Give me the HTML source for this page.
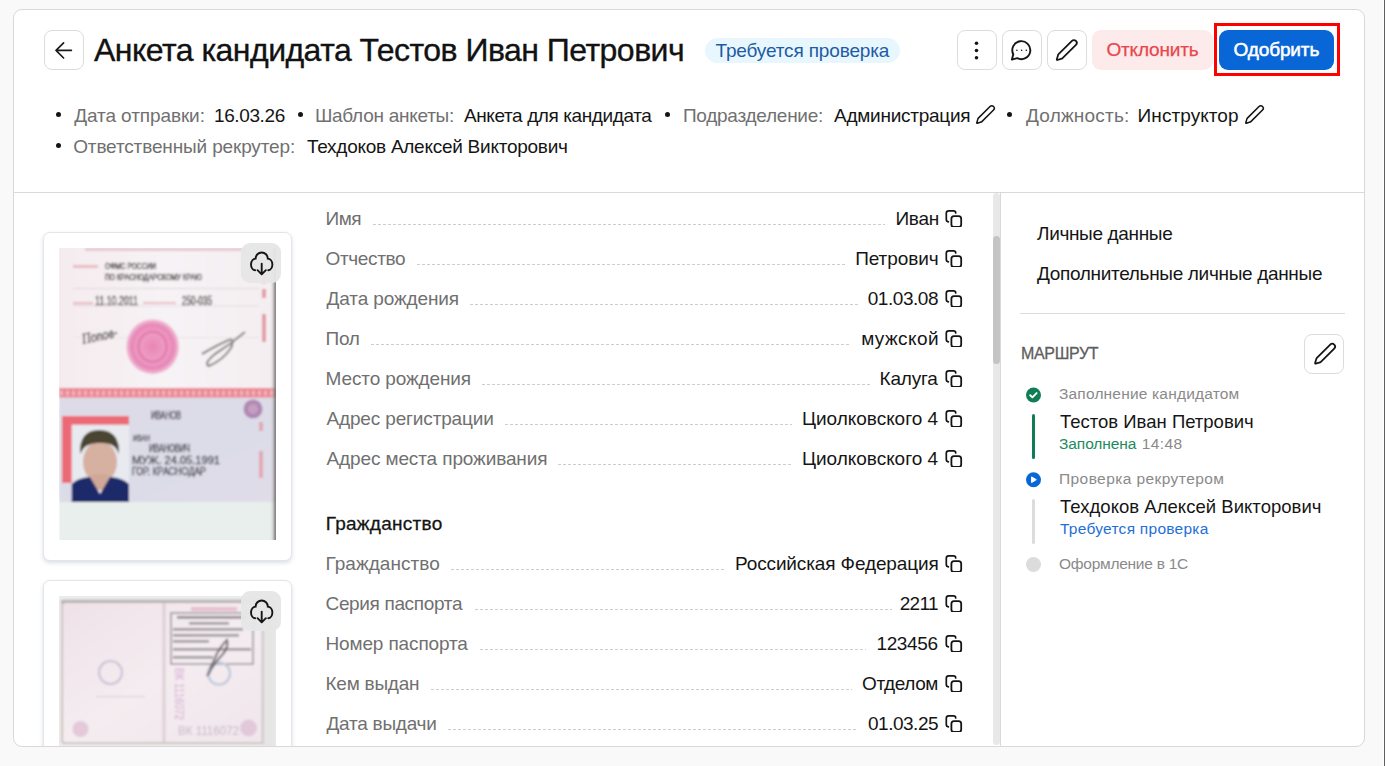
<!DOCTYPE html>
<html><head><meta charset="utf-8">
<style>
*{box-sizing:border-box;margin:0;padding:0}
html,body{width:1385px;height:766px;overflow:hidden;background:#f9f9f9;font-family:"Liberation Sans",sans-serif;color:#151515}
.a{position:absolute}
.t{position:absolute;white-space:nowrap;line-height:1}
#card{position:absolute;left:13px;top:9px;width:1352px;height:738px;border:1px solid #d9d9d9;border-radius:9px;background:#fff}
.ib{position:absolute;border:1px solid #dcdcdc;border-radius:8px;background:#fff;width:40px;height:40px}
.ib svg{position:absolute;left:-1px;top:-1px}
.dot{position:absolute;width:5px;height:5px;border-radius:50%;background:#151515}
.lead{position:absolute;height:1px;background:repeating-linear-gradient(90deg,#cdcdcd 0 3px,transparent 3px 5px)}
.cp{position:absolute;left:943px;width:20px;height:20px}
.pc{position:absolute;border:1px solid #e1e6ee;border-radius:7px;background:#fff;box-shadow:0 2px 4px rgba(30,50,90,.16)}
.dl{position:absolute;width:40px;height:40px;border-radius:9px;background:rgba(230,230,230,.96)}
.dl svg{position:absolute;left:0;top:0}
</style></head>
<body>
<div class="a" style="left:1383px;top:0;width:1px;height:766px;background:#fff"></div><div class="a" style="left:1384px;top:0;width:1px;height:766px;background:#5f5f5f"></div>
<div id="card"></div>

<!-- back button -->
<div class="ib" style="left:44px;top:30px">
  <svg width="40" height="40" viewBox="0 0 40 40"><path d="M27.4 20.4H12M19.6 12.8L12 20.4L19.6 28" fill="none" stroke="#1a1a1a" stroke-width="1.65" stroke-linecap="round" stroke-linejoin="round"/></svg>
</div>
<!-- badge -->
<div class="a" style="left:705px;top:38px;width:195px;height:25px;border-radius:12.5px;background:#e8f7fd"></div>

<!-- icon buttons -->
<div class="ib" style="left:957px;top:30px">
  <svg width="40" height="40" viewBox="0 0 40 40"><circle cx="19.5" cy="13.2" r="1.8" fill="#151515"/><circle cx="19.5" cy="20.5" r="1.8" fill="#151515"/><circle cx="19.5" cy="27.8" r="1.8" fill="#151515"/></svg>
</div>
<div class="ib" style="left:1002px;top:30px">
  <svg width="40" height="40" viewBox="0 0 40 40"><g transform="translate(7.3 8.2)"><path d="M7.9 20A9 9 0 1 0 4 16.1L2.6 21.4Z" fill="none" stroke="#151515" stroke-width="1.9" stroke-linejoin="round"/><circle cx="7.6" cy="12" r=".8" fill="#151515"/><circle cx="12.3" cy="12" r=".8" fill="#151515"/><circle cx="17" cy="12" r=".8" fill="#151515"/></g></svg>
</div>
<div class="ib" style="left:1047px;top:30px">
  <svg width="40" height="40" viewBox="0 0 40 40"><g transform="translate(7.75 8.05)"><path d="M21.174 6.812a1 1 0 0 0-3.986-3.987L3.842 16.174a2 2 0 0 0-.5.83l-1.321 4.352a.5.5 0 0 0 .623.622l4.353-1.32a2 2 0 0 0 .83-.497z" fill="none" stroke="#151515" stroke-width="1.75" stroke-linejoin="round"/></g></svg>
</div>
<div class="a" style="left:1092px;top:30px;width:121px;height:40px;border-radius:9px;background:#fdeaea"></div>
<div class="a" style="left:1219px;top:30px;width:115px;height:40px;border-radius:9px;background:#0866d6"></div>
<div class="a" style="left:1214px;top:23px;width:126px;height:53px;border:3px solid #ff0000"></div>

<!-- meta bullets & pencils -->
<div class="dot" style="left:56.25px;top:112.45px"></div>
<div class="dot" style="left:298.15px;top:112.45px"></div>
<div class="dot" style="left:664.95px;top:112.45px"></div>
<div class="dot" style="left:1007.45px;top:112.45px"></div>
<div class="dot" style="left:56.25px;top:143.25px"></div>
<svg class="a" style="left:974.85px;top:103.95px" width="21" height="21" viewBox="0 0 24 24"><path d="M21.174 6.812a1 1 0 0 0-3.986-3.987L3.842 16.174a2 2 0 0 0-.5.83l-1.321 4.352a.5.5 0 0 0 .623.622l4.353-1.32a2 2 0 0 0 .83-.497z" fill="none" stroke="#151515" stroke-width="1.75" stroke-linejoin="round"/></svg>
<svg class="a" style="left:1243.7px;top:103.95px" width="21" height="21" viewBox="0 0 24 24"><path d="M21.174 6.812a1 1 0 0 0-3.986-3.987L3.842 16.174a2 2 0 0 0-.5.83l-1.321 4.352a.5.5 0 0 0 .623.622l4.353-1.32a2 2 0 0 0 .83-.497z" fill="none" stroke="#151515" stroke-width="1.75" stroke-linejoin="round"/></svg>

<div class="a" style="left:14px;top:192px;width:1350px;height:1px;background:#d9d9d9"></div>

<!-- content clip -->
<div class="a" style="left:14px;top:193px;width:1350px;height:553px;overflow:hidden">
 <div class="a" style="left:-14px;top:-193px;width:1385px;height:766px">
  <!-- photo card 1 -->
  <div class="pc" style="left:43px;top:232px;width:249px;height:329px"></div>
  <svg class="a" style="left:59px;top:248px" width="217" height="292" viewBox="0 0 217 292">
<defs>
 <pattern id="chk" x="0" y="0" width="6" height="5" patternUnits="userSpaceOnUse"><rect x="1" y="0" width="3" height="5" fill="#f6c6cc"/></pattern>
 <filter id="bl1" x="-5%" y="-5%" width="110%" height="110%"><feGaussianBlur stdDeviation="0.9"/></filter>
 <filter id="bl2" x="-20%" y="-20%" width="140%" height="140%"><feGaussianBlur stdDeviation="1.6"/></filter>
 <linearGradient id="pg1" x1="0" y1="0" x2="1" y2="0"><stop offset="0" stop-color="#f5ebef"/><stop offset=".5" stop-color="#f6f3f5"/><stop offset="1" stop-color="#f4eef1"/></linearGradient>
 <linearGradient id="lav" x1="0" y1="0" x2="1" y2="1"><stop offset="0" stop-color="#dedbe7"/><stop offset=".6" stop-color="#dcdce8"/><stop offset="1" stop-color="#e0dde8"/></linearGradient>
 <linearGradient id="edge" x1="0" y1="0" x2="1" y2="0"><stop offset="0" stop-color="#f3edf0" stop-opacity="0"/><stop offset=".55" stop-color="#9d9899" stop-opacity=".6"/><stop offset=".8" stop-color="#4a4646"/><stop offset="1" stop-color="#8a8686"/></linearGradient>
 <radialGradient id="stamp" cx=".5" cy=".5" r=".5"><stop offset="0" stop-color="#e77fb0"/><stop offset=".55" stop-color="#ee9cc4"/><stop offset=".8" stop-color="#e680b2"/><stop offset="1" stop-color="#f1c3d9"/></radialGradient>
</defs>
<g filter="url(#bl1)">
 <rect x="-2" y="-2" width="221" height="144" fill="url(#pg1)"/>
 <rect x="26" y="0" width="160" height="3" fill="#e3b7c4" opacity=".7"/>
 <rect x="14" y="17" width="25" height="3" fill="#e6b0b8" opacity=".8"/>
 <text x="46" y="21" font-family="Liberation Sans" font-size="9.5" fill="#3d393b" stroke="#3d393b" stroke-width=".35" textLength="51" lengthAdjust="spacingAndGlyphs">ОФМС РОССИИ</text>
 <text x="46" y="32" font-family="Liberation Sans" font-size="9.5" fill="#3d393b" stroke="#3d393b" stroke-width=".35" textLength="97" lengthAdjust="spacingAndGlyphs">ПО КРАСНОДАРСКОМУ КРАЮ</text>
 <rect x="14" y="40" width="186" height="1" fill="#e2d6dc"/>
 <rect x="14" y="54" width="20" height="2.5" fill="#e6b0b8" opacity=".8"/>
 <text x="36" y="57" font-family="Liberation Sans" font-size="12" fill="#3a3637" stroke="#3a3637" stroke-width=".3" textLength="43" lengthAdjust="spacingAndGlyphs">11.10.2011</text>
 <rect x="84" y="54" width="33" height="2" fill="#e6b0b8" opacity=".8"/>
 <text x="123" y="57" font-family="Liberation Sans" font-size="12" fill="#3a3637" stroke="#3a3637" stroke-width=".3" textLength="30" lengthAdjust="spacingAndGlyphs">250-035</text>
 <rect x="14" y="57.5" width="186" height="1" fill="#e4dadf"/>
 <rect x="14" y="89" width="186" height="1" fill="#eae0e4"/>
 <text x="0" y="0" transform="translate(24 96) rotate(-12)" font-family="Liberation Serif" font-style="italic" font-size="15" fill="#5a5658" stroke="#5a5658" stroke-width=".5" textLength="36" lengthAdjust="spacingAndGlyphs">Попов-</text>
 <ellipse cx="93.6" cy="98.7" rx="26.5" ry="27.5" fill="url(#stamp)" opacity=".95"/>
 <ellipse cx="93.6" cy="98.7" rx="14" ry="15" fill="none" stroke="#e06aa3" stroke-width="3" opacity=".6"/>
 <path d="M143 106 Q160 96 170 92 Q176 90 172 100 Q164 112 150 118 Q144 116 156 106 Q172 96 186 84" fill="none" stroke="#6d6a6b" stroke-width="2.2" opacity=".8"/>
 <rect x="203" y="20" width="4" height="15" fill="#e49aa8"/>
 <rect x="203" y="41" width="4" height="9" fill="#e49aa8"/>
 <rect x="203" y="66" width="4" height="28" fill="#e49aa8"/>
 <rect x="0" y="140" width="217" height="10" fill="#eb8592"/><rect x="0" y="142.5" width="217" height="5" fill="url(#chk)" opacity=".7"/>
 <rect x="0" y="149.5" width="217" height="105" fill="url(#lav)"/>
 <circle cx="194" cy="161" r="9.5" fill="#a879aa" opacity=".85"/>
 <circle cx="194" cy="161" r="5" fill="#c9a5c4" opacity=".8"/>
 <text x="92" y="171" font-family="Liberation Sans" font-size="10" fill="#3c3944" stroke="#3c3944" stroke-width=".3" textLength="30" lengthAdjust="spacingAndGlyphs">ИВАНОВ</text>
 <rect x="3" y="168" width="67" height="9" fill="#ec6b76"/>
 <rect x="3" y="168" width="10" height="67" fill="#ec6b76"/>
 <rect x="12.7" y="176.7" width="57.3" height="77.3" fill="#e8eaf0"/>
 <ellipse cx="41" cy="214" rx="17" ry="21" fill="#d6b0a0"/>
 <path d="M21 206 Q20 182 40 182 Q61 182 60 206 Q56 194 41 195 Q26 194 21 206Z" fill="#4a4430"/>
 <rect x="33" y="226" width="16" height="16" fill="#d1a898"/><path d="M12.7 254 L12.7 236 Q18 230 31 229 L41 246 L51 229 Q64 230 70 236 L70 254Z" fill="#1e2a6a"/>
 <text x="74" y="193" font-family="Liberation Sans" font-size="9" fill="#3c3944" stroke="#3c3944" stroke-width=".3" textLength="17" lengthAdjust="spacingAndGlyphs">ИВАН</text>
 <text x="90" y="204" font-family="Liberation Sans" font-size="10" fill="#3c3944" stroke="#3c3944" stroke-width=".3" textLength="41" lengthAdjust="spacingAndGlyphs">ИВАНОВИЧ</text>
 <text x="73" y="216" font-family="Liberation Sans" font-size="10" fill="#3c3944" stroke="#3c3944" stroke-width=".3" textLength="88" lengthAdjust="spacingAndGlyphs">МУЖ.   24.05.1991</text>
 <text x="73" y="227" font-family="Liberation Sans" font-size="10" fill="#3c3944" stroke="#3c3944" stroke-width=".3" textLength="74" lengthAdjust="spacingAndGlyphs">ГОР. КРАСНОДАР</text>
 <rect x="200" y="174" width="4" height="9" fill="#e49aa8" opacity=".8"/>
 <rect x="200" y="203" width="4" height="27" fill="#e49aa8" opacity=".8"/>
 <rect x="0" y="254" width="217" height="40" fill="#e8efec"/>
 <rect x="211" y="-2" width="7" height="296" fill="url(#edge)"/>
</g>
</svg>

  <div class="dl" style="left:241px;top:243px">
   <svg width="40" height="40" viewBox="0 0 40 40"><path d="M14.1 27.3A4.9 5.9 0 0 1 14.6 15.6A6.1 6.1 0 0 1 26.8 15.6A4.9 5.9 0 0 1 27.3 27.3" fill="none" stroke="#151515" stroke-width="1.9" stroke-linecap="round"/><path d="M20.7 20.6V31.3M16.5 27.2L20.7 31.4L24.9 27.2" fill="none" stroke="#151515" stroke-width="1.9" stroke-linecap="round" stroke-linejoin="round"/></svg>
  </div>
  <!-- photo card 2 -->
  <div class="pc" style="left:43px;top:580px;width:249px;height:329px"></div>
  <svg class="a" style="left:59px;top:596px" width="217" height="160" viewBox="0 0 217 160">
<defs>
 <filter id="bl3" x="-5%" y="-5%" width="110%" height="110%"><feGaussianBlur stdDeviation="1.1"/></filter>
 <linearGradient id="pg2" x1="0" y1="0" x2="1" y2="1"><stop offset="0" stop-color="#efe2e8"/><stop offset=".5" stop-color="#f4ecf0"/><stop offset="1" stop-color="#f0e6eb"/></linearGradient>
 <linearGradient id="topsh" x1="0" y1="0" x2="0" y2="1"><stop offset="0" stop-color="#e9e9e9"/><stop offset=".5" stop-color="#9c9a9b"/><stop offset="1" stop-color="#d9d0d4"/></linearGradient>
</defs>
<g filter="url(#bl3)">
 <rect x="-2" y="-2" width="221" height="170" fill="#ececec"/>
 <rect x="2" y="3" width="208" height="6" rx="3" fill="url(#topsh)"/>
 <rect x="2.5" y="6" width="208" height="142" rx="3" fill="#c4b6b3"/>
 <rect x="4" y="7" width="205" height="139.5" rx="2" fill="url(#pg2)"/>
 <rect x="103.5" y="7" width="3" height="139" fill="#ddd0d6"/>
 <circle cx="51.5" cy="76.5" r="11.5" fill="none" stroke="#c9c6d8" stroke-width="2.2"/>
 <rect x="37" y="100" width="49" height="1.2" fill="#dcd3d8"/>
 <circle cx="21.5" cy="133" r="8" fill="#e3c9da"/>
 <rect x="132" y="11" width="46" height="4" fill="#e3b4c6" opacity=".8"/>
 <rect x="112" y="17" width="82" height="51" fill="none" stroke="#8a8487" stroke-width="1.3"/>
 <rect x="118" y="20" width="70" height="2.6" fill="#6c6768" opacity=".75"/>
 <rect x="130" y="26" width="40" height="2.6" fill="#5a5557" opacity=".55"/>
 <rect x="114" y="32" width="70" height="2.6" fill="#5a5557" opacity=".55"/>
 <rect x="114" y="38" width="66" height="2.6" fill="#5a5557" opacity=".55"/>
 <rect x="114" y="44" width="36" height="2.6" fill="#5a5557" opacity=".55"/>
 <rect x="114" y="52" width="78" height="2.6" fill="#5a5557" opacity=".55"/>
 <rect x="114" y="60" width="40" height="2.6" fill="#5a5557" opacity=".55"/>
 <circle cx="160" cy="77.5" r="11" fill="none" stroke="#c3cade" stroke-width="2.5"/>
 <path d="M148 80 Q156 66 164 58 Q170 50 168 44 Q160 52 156 62 Q152 70 150 78" fill="none" stroke="#5e5a5c" stroke-width="2.2" opacity=".8"/>
 <text x="0" y="0" transform="translate(116 72) rotate(90)" font-family="Liberation Sans" font-size="13" fill="#d6a9d2" textLength="52" lengthAdjust="spacingAndGlyphs">ВК 1116072</text>
 <text x="119" y="139" font-family="Liberation Sans" font-size="12" fill="#c9b9c6" textLength="61" lengthAdjust="spacingAndGlyphs">ВК 1116072</text>
 <circle cx="189.5" cy="132" r="8.5" fill="#e2c9da"/>
 <rect x="202.5" y="7" width="2.5" height="139" fill="#d2cacd"/>
 <rect x="205" y="7" width="12" height="160" fill="#e6e6e4"/>
</g>
</svg>

  <div class="dl" style="left:241px;top:591px">
   <svg width="40" height="40" viewBox="0 0 40 40"><path d="M14.1 27.3A4.9 5.9 0 0 1 14.6 15.6A6.1 6.1 0 0 1 26.8 15.6A4.9 5.9 0 0 1 27.3 27.3" fill="none" stroke="#151515" stroke-width="1.9" stroke-linecap="round"/><path d="M20.7 20.6V31.3M16.5 27.2L20.7 31.4L24.9 27.2" fill="none" stroke="#151515" stroke-width="1.9" stroke-linecap="round" stroke-linejoin="round"/></svg>
  </div>

  <div class="lead" style="left:372.5px;top:224px;width:512.9px"></div>
<svg class="cp" style="top:207px" viewBox="0 0 20 20"><path d="M5.4 14.8C4.2 14.6 3.3 13.8 3.3 12.4V6.3C3.3 5 4.3 3.9 5.7 3.9H10.5C11.8 3.9 12.7 4.8 12.7 5.9" fill="none" stroke="#151515" stroke-width="1.7" stroke-linecap="round"/><rect x="8.4" y="9.1" width="9.8" height="10.9" rx="2.6" fill="none" stroke="#151515" stroke-width="1.8"/></svg>
<div class="lead" style="left:417.0px;top:264px;width:428.2px"></div>
<svg class="cp" style="top:247px" viewBox="0 0 20 20"><path d="M5.4 14.8C4.2 14.6 3.3 13.8 3.3 12.4V6.3C3.3 5 4.3 3.9 5.7 3.9H10.5C11.8 3.9 12.7 4.8 12.7 5.9" fill="none" stroke="#151515" stroke-width="1.7" stroke-linecap="round"/><rect x="8.4" y="9.1" width="9.8" height="10.9" rx="2.6" fill="none" stroke="#151515" stroke-width="1.8"/></svg>
<div class="lead" style="left:470.0px;top:304px;width:387.7px"></div>
<svg class="cp" style="top:287px" viewBox="0 0 20 20"><path d="M5.4 14.8C4.2 14.6 3.3 13.8 3.3 12.4V6.3C3.3 5 4.3 3.9 5.7 3.9H10.5C11.8 3.9 12.7 4.8 12.7 5.9" fill="none" stroke="#151515" stroke-width="1.7" stroke-linecap="round"/><rect x="8.4" y="9.1" width="9.8" height="10.9" rx="2.6" fill="none" stroke="#151515" stroke-width="1.8"/></svg>
<div class="lead" style="left:371.0px;top:344px;width:480.2px"></div>
<svg class="cp" style="top:327px" viewBox="0 0 20 20"><path d="M5.4 14.8C4.2 14.6 3.3 13.8 3.3 12.4V6.3C3.3 5 4.3 3.9 5.7 3.9H10.5C11.8 3.9 12.7 4.8 12.7 5.9" fill="none" stroke="#151515" stroke-width="1.7" stroke-linecap="round"/><rect x="8.4" y="9.1" width="9.8" height="10.9" rx="2.6" fill="none" stroke="#151515" stroke-width="1.8"/></svg>
<div class="lead" style="left:482.0px;top:384px;width:387.5px"></div>
<svg class="cp" style="top:367px" viewBox="0 0 20 20"><path d="M5.4 14.8C4.2 14.6 3.3 13.8 3.3 12.4V6.3C3.3 5 4.3 3.9 5.7 3.9H10.5C11.8 3.9 12.7 4.8 12.7 5.9" fill="none" stroke="#151515" stroke-width="1.7" stroke-linecap="round"/><rect x="8.4" y="9.1" width="9.8" height="10.9" rx="2.6" fill="none" stroke="#151515" stroke-width="1.8"/></svg>
<div class="lead" style="left:505.0px;top:424px;width:287.0px"></div>
<svg class="cp" style="top:407px" viewBox="0 0 20 20"><path d="M5.4 14.8C4.2 14.6 3.3 13.8 3.3 12.4V6.3C3.3 5 4.3 3.9 5.7 3.9H10.5C11.8 3.9 12.7 4.8 12.7 5.9" fill="none" stroke="#151515" stroke-width="1.7" stroke-linecap="round"/><rect x="8.4" y="9.1" width="9.8" height="10.9" rx="2.6" fill="none" stroke="#151515" stroke-width="1.8"/></svg>
<div class="lead" style="left:558.0px;top:464px;width:234.0px"></div>
<svg class="cp" style="top:447px" viewBox="0 0 20 20"><path d="M5.4 14.8C4.2 14.6 3.3 13.8 3.3 12.4V6.3C3.3 5 4.3 3.9 5.7 3.9H10.5C11.8 3.9 12.7 4.8 12.7 5.9" fill="none" stroke="#151515" stroke-width="1.7" stroke-linecap="round"/><rect x="8.4" y="9.1" width="9.8" height="10.9" rx="2.6" fill="none" stroke="#151515" stroke-width="1.8"/></svg>
<div class="lead" style="left:450.9px;top:569px;width:274.1px"></div>
<svg class="cp" style="top:552px" viewBox="0 0 20 20"><path d="M5.4 14.8C4.2 14.6 3.3 13.8 3.3 12.4V6.3C3.3 5 4.3 3.9 5.7 3.9H10.5C11.8 3.9 12.7 4.8 12.7 5.9" fill="none" stroke="#151515" stroke-width="1.7" stroke-linecap="round"/><rect x="8.4" y="9.1" width="9.8" height="10.9" rx="2.6" fill="none" stroke="#151515" stroke-width="1.8"/></svg>
<div class="lead" style="left:475.0px;top:609px;width:417.0px"></div>
<svg class="cp" style="top:592px" viewBox="0 0 20 20"><path d="M5.4 14.8C4.2 14.6 3.3 13.8 3.3 12.4V6.3C3.3 5 4.3 3.9 5.7 3.9H10.5C11.8 3.9 12.7 4.8 12.7 5.9" fill="none" stroke="#151515" stroke-width="1.7" stroke-linecap="round"/><rect x="8.4" y="9.1" width="9.8" height="10.9" rx="2.6" fill="none" stroke="#151515" stroke-width="1.8"/></svg>
<div class="lead" style="left:479.7px;top:649px;width:386.8px"></div>
<svg class="cp" style="top:632px" viewBox="0 0 20 20"><path d="M5.4 14.8C4.2 14.6 3.3 13.8 3.3 12.4V6.3C3.3 5 4.3 3.9 5.7 3.9H10.5C11.8 3.9 12.7 4.8 12.7 5.9" fill="none" stroke="#151515" stroke-width="1.7" stroke-linecap="round"/><rect x="8.4" y="9.1" width="9.8" height="10.9" rx="2.6" fill="none" stroke="#151515" stroke-width="1.8"/></svg>
<div class="lead" style="left:430.6px;top:689px;width:421.4px"></div>
<svg class="cp" style="top:672px" viewBox="0 0 20 20"><path d="M5.4 14.8C4.2 14.6 3.3 13.8 3.3 12.4V6.3C3.3 5 4.3 3.9 5.7 3.9H10.5C11.8 3.9 12.7 4.8 12.7 5.9" fill="none" stroke="#151515" stroke-width="1.7" stroke-linecap="round"/><rect x="8.4" y="9.1" width="9.8" height="10.9" rx="2.6" fill="none" stroke="#151515" stroke-width="1.8"/></svg>
<div class="lead" style="left:448.0px;top:729px;width:410.0px"></div>
<svg class="cp" style="top:712px" viewBox="0 0 20 20"><path d="M5.4 14.8C4.2 14.6 3.3 13.8 3.3 12.4V6.3C3.3 5 4.3 3.9 5.7 3.9H10.5C11.8 3.9 12.7 4.8 12.7 5.9" fill="none" stroke="#151515" stroke-width="1.7" stroke-linecap="round"/><rect x="8.4" y="9.1" width="9.8" height="10.9" rx="2.6" fill="none" stroke="#151515" stroke-width="1.8"/></svg>

  <!-- scrollbar -->
  <div class="a" style="left:993px;top:193px;width:7px;height:552px;background:#e8e8e8;border-radius:3.5px"></div>
  <div class="a" style="left:993px;top:236px;width:7px;height:128px;background:#c4c4c4;border-radius:3.5px"></div>
  <div class="a" style="left:1000px;top:193px;width:1px;height:553px;background:#d9d9d9"></div>

  <!-- right panel -->
  <div class="a" style="left:1020px;top:313px;width:325px;height:1px;background:#dcdcdc"></div>
  <div class="ib" style="left:1304px;top:334px">
   <svg width="40" height="40" viewBox="0 0 40 40"><g transform="translate(9.05 7.7)"><path d="M21.174 6.812a1 1 0 0 0-3.986-3.987L3.842 16.174a2 2 0 0 0-.5.83l-1.321 4.352a.5.5 0 0 0 .623.622l4.353-1.32a2 2 0 0 0 .83-.497z" fill="none" stroke="#151515" stroke-width="1.75" stroke-linejoin="round"/></g></svg>
  </div>
  <svg class="a" style="left:1025px;top:386.5px" width="17" height="17" viewBox="0 0 17 17"><circle cx="8.5" cy="8" r="7.5" fill="#117d55"/><path d="M5.2 8.2L7.4 10.3L11.6 6.1" fill="none" stroke="#fff" stroke-width="1.9" stroke-linecap="round" stroke-linejoin="round"/></svg>
  <div class="a" style="left:1032px;top:413.5px;width:3px;height:45px;border-radius:1.5px;background:#117d55"></div>
  <svg class="a" style="left:1025px;top:471.5px" width="17" height="17" viewBox="0 0 17 17"><circle cx="8.5" cy="7.7" r="7.5" fill="#0866d6"/><path d="M6.6 4.9V10.5L11.3 7.7Z" fill="#fff" stroke="#fff" stroke-width="1" stroke-linejoin="round"/></svg>
  <div class="a" style="left:1032px;top:499px;width:3px;height:45px;border-radius:1.5px;background:#dcdcdc"></div>
  <div class="a" style="left:1026px;top:556.5px;width:15px;height:15px;border-radius:50%;background:#dcdcdc"></div>
 </div>
</div>

<div class="t" style="left:94.00px;top:34.00px;font-size:32px;font-weight:400;letter-spacing:-0.528px;color:#121212;-webkit-text-stroke:0.35px #121212;">Анкета кандидата Тестов Иван Петрович</div>
<div class="t" style="left:715.50px;top:41.00px;font-size:19px;font-weight:400;letter-spacing:-0.147px;color:#1d5ba6;">Требуется проверка</div>
<div class="t" style="left:1106.50px;top:40.00px;font-size:19px;font-weight:400;letter-spacing:-0.188px;color:#e8474c;-webkit-text-stroke:0.25px #e8474c;">Отклонить</div>
<div class="t" style="left:1233.50px;top:40.00px;font-size:19px;font-weight:400;letter-spacing:-0.129px;color:#ffffff;-webkit-text-stroke:0.55px #fff;">Одобрить</div>
<div class="t" style="left:74.20px;top:106.00px;font-size:19px;font-weight:400;letter-spacing:-0.092px;color:#707070;">Дата отправки:</div>
<div class="t" style="left:214.00px;top:106.00px;font-size:19px;font-weight:400;letter-spacing:-0.386px;color:#151515;">16.03.26</div>
<div class="t" style="left:314.90px;top:106.00px;font-size:19px;font-weight:400;letter-spacing:-0.262px;color:#707070;">Шаблон анкеты:</div>
<div class="t" style="left:464.00px;top:106.00px;font-size:19px;font-weight:400;letter-spacing:-0.405px;color:#151515;">Анкета для кандидата</div>
<div class="t" style="left:682.90px;top:106.00px;font-size:19px;font-weight:400;letter-spacing:-0.254px;color:#707070;">Подразделение:</div>
<div class="t" style="left:834.00px;top:106.00px;font-size:19px;font-weight:400;letter-spacing:-0.258px;color:#151515;">Администрация</div>
<div class="t" style="left:1026.00px;top:106.00px;font-size:19px;font-weight:400;letter-spacing:0.200px;color:#707070;">Должность:</div>
<div class="t" style="left:1137.60px;top:106.00px;font-size:19px;font-weight:400;letter-spacing:0.067px;color:#151515;">Инструктор</div>
<div class="t" style="left:73.20px;top:137.00px;font-size:19px;font-weight:400;letter-spacing:-0.145px;color:#707070;">Ответственный рекрутер:</div>
<div class="t" style="left:306.90px;top:137.00px;font-size:19px;font-weight:400;letter-spacing:-0.258px;color:#151515;">Техдоков Алексей Викторович</div>
<div class="t" style="left:325.50px;top:209.00px;font-size:19px;font-weight:400;letter-spacing:-0.500px;color:#707070;">Имя</div>
<div class="t" style="left:895.40px;top:209.00px;font-size:19px;font-weight:400;letter-spacing:-0.267px;color:#151515;">Иван</div>
<div class="t" style="left:325.50px;top:249.00px;font-size:19px;font-weight:400;letter-spacing:-0.357px;color:#707070;">Отчество</div>
<div class="t" style="left:855.20px;top:249.00px;font-size:19px;font-weight:400;letter-spacing:-0.086px;color:#151515;">Петрович</div>
<div class="t" style="left:326.50px;top:289.00px;font-size:19px;font-weight:400;letter-spacing:-0.125px;color:#707070;">Дата рождения</div>
<div class="t" style="left:867.70px;top:289.00px;font-size:19px;font-weight:400;letter-spacing:-0.443px;color:#151515;">01.03.08</div>
<div class="t" style="left:325.50px;top:329.00px;font-size:19px;font-weight:400;letter-spacing:-0.250px;color:#707070;">Пол</div>
<div class="t" style="left:861.20px;top:329.00px;font-size:19px;font-weight:400;letter-spacing:0.400px;color:#151515;">мужской</div>
<div class="t" style="left:325.50px;top:369.00px;font-size:19px;font-weight:400;letter-spacing:-0.115px;color:#707070;">Место рождения</div>
<div class="t" style="left:879.50px;top:369.00px;font-size:19px;font-weight:400;letter-spacing:-0.180px;color:#151515;">Калуга</div>
<div class="t" style="left:326.50px;top:409.00px;font-size:19px;font-weight:400;letter-spacing:-0.156px;color:#707070;">Адрес регистрации</div>
<div class="t" style="left:802.00px;top:409.00px;font-size:19px;font-weight:400;letter-spacing:-0.031px;color:#151515;">Циолковского 4</div>
<div class="t" style="left:326.50px;top:449.00px;font-size:19px;font-weight:400;letter-spacing:-0.119px;color:#707070;">Адрес места проживания</div>
<div class="t" style="left:802.00px;top:449.00px;font-size:19px;font-weight:400;letter-spacing:-0.031px;color:#151515;">Циолковского 4</div>
<div class="t" style="left:325.50px;top:554.00px;font-size:19px;font-weight:400;letter-spacing:0.040px;color:#707070;">Гражданство</div>
<div class="t" style="left:734.99px;top:554.00px;font-size:19px;font-weight:400;letter-spacing:-0.126px;color:#151515;">Российская Федерация</div>
<div class="t" style="left:325.50px;top:594.00px;font-size:19px;font-weight:400;letter-spacing:-0.346px;color:#707070;">Серия паспорта</div>
<div class="t" style="left:899.70px;top:594.00px;font-size:19px;font-weight:400;letter-spacing:-0.700px;color:#151515;">2211</div>
<div class="t" style="left:325.50px;top:634.00px;font-size:19px;font-weight:400;letter-spacing:-0.138px;color:#707070;">Номер паспорта</div>
<div class="t" style="left:876.50px;top:634.00px;font-size:19px;font-weight:400;letter-spacing:-0.380px;color:#151515;">123456</div>
<div class="t" style="left:325.50px;top:674.00px;font-size:19px;font-weight:400;letter-spacing:-0.237px;color:#707070;">Кем выдан</div>
<div class="t" style="left:862.00px;top:674.00px;font-size:19px;font-weight:400;letter-spacing:-0.400px;color:#151515;">Отделом</div>
<div class="t" style="left:326.50px;top:714.00px;font-size:19px;font-weight:400;letter-spacing:-0.250px;color:#707070;">Дата выдачи</div>
<div class="t" style="left:868.00px;top:714.00px;font-size:19px;font-weight:400;letter-spacing:-0.486px;color:#151515;">01.03.25</div>
<div class="t" style="left:325.70px;top:514.00px;font-size:19px;font-weight:400;letter-spacing:0.270px;color:#151515;-webkit-text-stroke:0.3px #151515;">Гражданство</div>
<div class="t" style="left:1037.00px;top:224.00px;font-size:19px;font-weight:400;letter-spacing:-0.342px;color:#151515;">Личные данные</div>
<div class="t" style="left:1037.00px;top:264.00px;font-size:19px;font-weight:400;letter-spacing:-0.322px;color:#151515;">Дополнительные личные данные</div>
<div class="t" style="left:1021.00px;top:346.00px;font-size:16px;font-weight:400;letter-spacing:-0.333px;color:#5e5e5e;-webkit-text-stroke:0.3px #5e5e5e;">МАРШРУТ</div>
<div class="t" style="left:1059.00px;top:386.00px;font-size:15.5px;font-weight:400;letter-spacing:0.185px;color:#8a8a8a;">Заполнение кандидатом</div>
<div class="t" style="left:1060.00px;top:413.00px;font-size:18.5px;font-weight:400;letter-spacing:0.000px;color:#151515;">Тестов Иван Петрович</div>
<div class="t" style="left:1059.00px;top:471.00px;font-size:15.5px;font-weight:400;letter-spacing:0.417px;color:#8a8a8a;">Проверка рекрутером</div>
<div class="t" style="left:1060.00px;top:498.00px;font-size:18.5px;font-weight:400;letter-spacing:0.031px;color:#151515;">Техдоков Алексей Викторович</div>
<div class="t" style="left:1060.00px;top:521.00px;font-size:15.5px;font-weight:400;letter-spacing:0.259px;color:#1f6fd8;">Требуется проверка</div>
<div class="t" style="left:1059.00px;top:556.00px;font-size:15.5px;font-weight:400;letter-spacing:-0.257px;color:#8a8a8a;">Оформление в 1С</div>
<div class="t" style="left:1059.00px;top:436.00px;font-size:15.5px;font-weight:400;letter-spacing:-0.075px;color:#1e8a5e;">Заполнена</div>
<div class="t" style="left:1141.70px;top:436.00px;font-size:15.5px;font-weight:400;letter-spacing:0.400px;color:#8a8a8a;">14:48</div>
</body></html>
